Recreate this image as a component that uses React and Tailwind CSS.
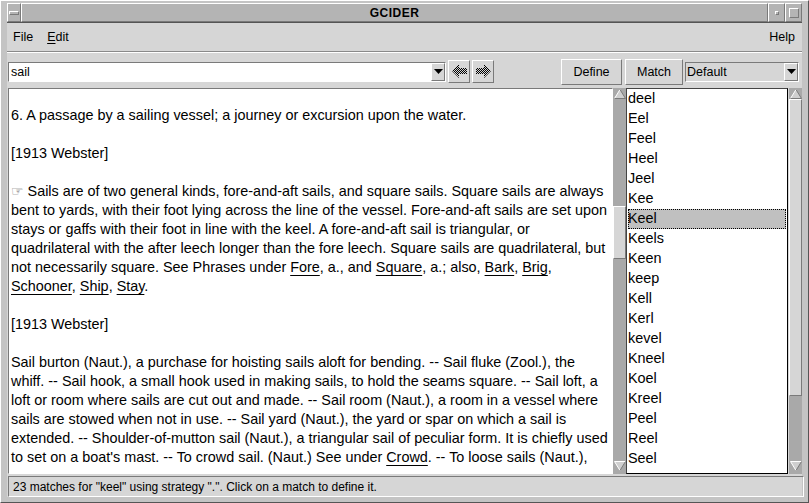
import React from "react";

const RAISED = "border border-t-white border-l-white border-r-[#7a7a7a] border-b-[#7a7a7a]";
const SUNKEN = "border border-t-[#7a7a7a] border-l-[#7a7a7a] border-r-white border-b-white";

const WORDS = [
  "deel", "Eel", "Feel", "Heel", "Jeel", "Kee", "Keel", "Keels", "Keen", "keep",
  "Kell", "Kerl", "kevel", "Kneel", "Koel", "Kreel", "Peel", "Reel", "Seel",
];

function U({ children }) {
  return <span className="underline underline-offset-[3px]">{children}</span>;
}

const LINES = [
  "6. A passage by a sailing vessel; a journey or excursion upon the water.",
  "",
  "[1913 Webster]",
  "",
  <>
    <span className="font-['DejaVu_Sans',sans-serif] text-[14px] text-[#666]">☞</span> Sails are of two general kinds, fore-and-aft sails, and square sails. Square sails are always
  </>,
  "bent to yards, with their foot lying across the line of the vessel. Fore-and-aft sails are set upon",
  "stays or gaffs with their foot in line with the keel. A fore-and-aft sail is triangular, or",
  "quadrilateral with the after leech longer than the fore leech. Square sails are quadrilateral, but",
  <>
    not necessarily square. See Phrases under <U>Fore</U>, a., and <U>Square</U>, a.; also, <U>Bark</U>, <U>Brig</U>,
  </>,
  <>
    <U>Schooner</U>, <U>Ship</U>, <U>Stay</U>.
  </>,
  "",
  "[1913 Webster]",
  "",
  "Sail burton (Naut.), a purchase for hoisting sails aloft for bending. -- Sail fluke (Zool.), the",
  "whiff. -- Sail hook, a small hook used in making sails, to hold the seams square. -- Sail loft, a",
  "loft or room where sails are cut out and made. -- Sail room (Naut.), a room in a vessel where",
  "sails are stowed when not in use. -- Sail yard (Naut.), the yard or spar on which a sail is",
  "extended. -- Shoulder-of-mutton sail (Naut.), a triangular sail of peculiar form. It is chiefly used",
  <>
    to set on a boat's mast. -- To crowd sail. (Naut.) See under <U>Crowd</U>. -- To loose sails (Naut.),
  </>,
];

function StippleArrow({ dir }) {
  const pts =
    dir === "left"
      ? "1,7 8,0 8,4 16,4 16,10 8,10 8,14"
      : "16,7 9,0 9,4 1,4 1,10 9,10 9,14";
  return (
    <svg width="17" height="15" viewBox="0 0 17 15">
      <defs>
        <pattern id={`chk-${dir}`} width="2" height="2" patternUnits="userSpaceOnUse">
          <rect width="1" height="1" fill="#000" />
          <rect x="1" y="1" width="1" height="1" fill="#000" />
        </pattern>
      </defs>
      <polygon points={pts} fill={`url(#chk-${dir})`} />
    </svg>
  );
}

function DropArrow() {
  return (
    <svg width="9" height="6" viewBox="0 0 9 6">
      <polygon points="0,0 9,0 4.5,5" fill="#000" />
    </svg>
  );
}

function ScrollArrow({ up }) {
  return (
    <svg width="12" height="10" viewBox="0 0 12 10" className="shrink-0">
      {up ? (
        <>
          <polygon points="6,0.5 11.5,9.5 0.5,9.5" fill="#cfcfcf" />
          <line x1="0.5" y1="9.5" x2="6" y2="0.5" stroke="#fff" />
          <line x1="6" y1="0.5" x2="11.5" y2="9.5" stroke="#7a7a7a" />
          <line x1="0.5" y1="9.5" x2="11.5" y2="9.5" stroke="#7a7a7a" />
        </>
      ) : (
        <>
          <polygon points="0.5,0.5 11.5,0.5 6,9.5" fill="#cfcfcf" />
          <line x1="0.5" y1="0.5" x2="11.5" y2="0.5" stroke="#fff" />
          <line x1="0.5" y1="0.5" x2="6" y2="9.5" stroke="#fff" />
          <line x1="6" y1="9.5" x2="11.5" y2="0.5" stroke="#7a7a7a" />
        </>
      )}
    </svg>
  );
}

function ScrollBar({ before, thumb, width }) {
  return (
    <div className={`flex flex-col items-center ${width} h-full bg-[#a9a9a9] pt-[1px] pb-[3px]`}>
      <ScrollArrow up />
      <div className="w-full shrink-0" style={{ height: before }} />
      <div
        className={`w-full shrink-0 bg-[#d6d6d6] ${RAISED}`}
        style={{ height: thumb }}
      />
      <div className="w-full flex-1" />
      <ScrollArrow />
    </div>
  );
}

export default function App() {
  return (
    <div className="w-[809px] h-[503px] overflow-hidden bg-[#c4c4c4] flex flex-col pt-[2px] pb-[6px] px-[6px] border border-t-white border-l-white border-r-[#555] border-b-[#555] font-['Liberation_Sans',Arial,sans-serif] text-black">
      {/* Title bar */}
      <div className="flex h-[19px] shrink-0">
        <div className={`w-[14px] bg-[#b4b4b4] flex items-center justify-center ${RAISED}`}>
          <div className={`w-[10px] h-[4px] ${RAISED}`} />
        </div>
        <div className={`flex-1 bg-[#b4b4b4] flex items-center justify-center text-[12px] font-bold tracking-[0.5px] ${RAISED}`}>
          GCIDER
        </div>
        <div className={`w-[17px] bg-[#b4b4b4] flex items-center justify-center ${RAISED}`}>
          <div className={`w-[4px] h-[4px] ${RAISED}`} />
        </div>
        <div className={`w-[17px] bg-[#b4b4b4] flex items-center justify-center ${RAISED}`}>
          <div className={`w-[10px] h-[10px] ${RAISED}`} />
        </div>
      </div>

      {/* Client area */}
      <div className="flex-1 flex flex-col bg-[#d6d6d6] border-t border-t-[#555]">
        {/* Menu bar */}
        <div className="h-[28px] shrink-0 flex items-center px-[6px] text-[12.5px]">
          <span>File</span>
          <span className="ml-[14px]">
            <span className="underline underline-offset-[2px]">E</span>dit
          </span>
          <span className="ml-auto mr-[1px]">Help</span>
        </div>
        <div className="h-[2px] shrink-0 border-t border-t-[#8a8a8a] border-b border-b-white" />

        {/* Toolbar */}
        <div className="h-[35px] shrink-0 flex items-start pl-[1px] pr-[3px] text-[12.5px]">
          <div className={`mt-[9px] flex w-[438px] h-[20px] bg-white ${SUNKEN}`}>
            <div className="flex-1 pl-[2px] leading-[18px]">sail</div>
            <div className={`w-[14px] bg-[#d6d6d6] flex items-center justify-center ${RAISED}`}>
              <DropArrow />
            </div>
          </div>
          <div className={`mt-[7px] ml-[2px] w-[22px] h-[23px] flex items-center justify-center ${RAISED}`}>
            <StippleArrow dir="left" />
          </div>
          <div className={`mt-[7px] ml-[2px] w-[22px] h-[23px] flex items-center justify-center ${RAISED}`}>
            <StippleArrow dir="right" />
          </div>
          <div className={`mt-[6px] ml-auto w-[61px] h-[26px] flex items-center justify-center ${RAISED}`}>
            Define
          </div>
          <div className={`mt-[6px] ml-[3px] w-[58px] h-[26px] flex items-center justify-center ${RAISED}`}>
            Match
          </div>
          <div className={`mt-[9px] ml-[2px] w-[114px] h-[20px] flex ${SUNKEN}`}>
            <div className="flex-1 pl-[1px] leading-[18px]">Default</div>
            <div className={`w-[14px] flex items-center justify-center ${RAISED}`}>
              <DropArrow />
            </div>
          </div>
        </div>

        {/* Content */}
        <div className="h-[386px] shrink-0 flex pl-[1px]">
          <div className={`w-[605px] h-full bg-white overflow-hidden ${SUNKEN}`}>
            <div className="pt-[17px] pl-[2px] text-[14.4px] leading-[19px] whitespace-nowrap">
              {LINES.map((l, i) => (
                <div key={i} className="h-[19px]">
                  {l}
                </div>
              ))}
            </div>
          </div>
          <ScrollBar width="w-[13px]" before={107} thumb={53} />
          <div className="w-[162px] h-[386px] bg-white border border-black border-t-[#444] border-l-[#444] overflow-hidden text-[14.4px]">
            {WORDS.map((w) => (
              <div
                key={w}
                className={`h-[20px] leading-[16px] ${
                  w === "Keel"
                    ? "bg-[#c0c0c0] border border-dotted border-black mx-[1px] -indent-[1px]"
                    : "border border-transparent"
                }`}
              >
                {w}
              </div>
            ))}
          </div>
          <ScrollBar width="w-[13px] ml-[1px]" before={0} thumb={297} />
        </div>

        {/* Status bar */}
        <div className={`mt-[2px] ml-[1px] w-[796px] h-[21px] shrink-0 flex items-center pl-[4px] text-[12px] ${SUNKEN}`}>
          23 matches for "keel" using strategy ".". Click on a match to define it.
        </div>
      </div>
    </div>
  );
}
